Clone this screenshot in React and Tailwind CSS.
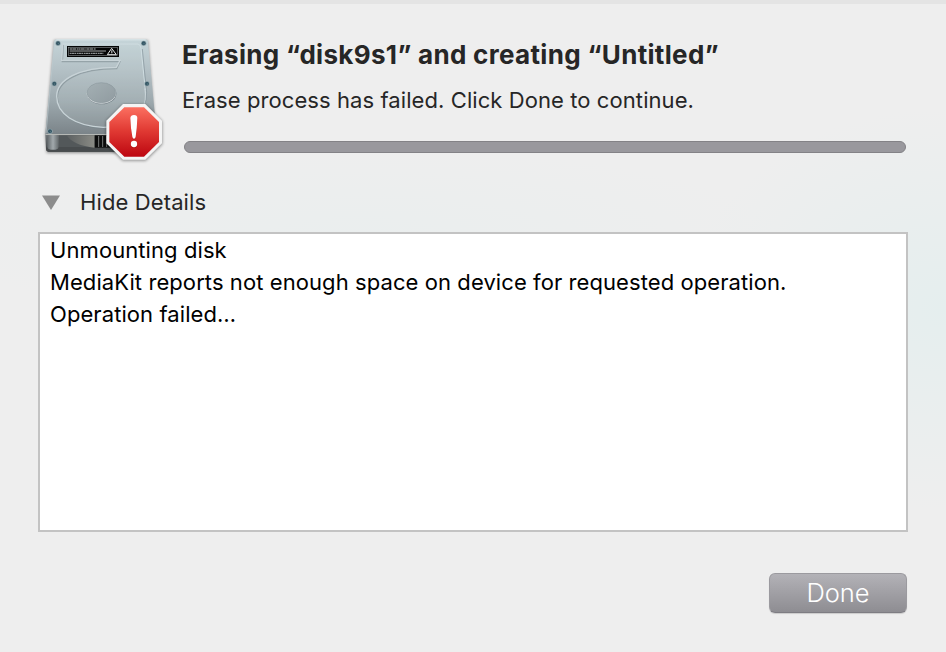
import { useState } from 'react'

const LOG = [
  'Unmounting disk',
  'MediaKit reports not enough space on device for requested operation.',
  'Operation failed…',
]

const SCREWS = [[84, 55], [341, 55], [73, 176], [351, 176], [60, 319]]

function DriveIcon() {
  return (
    <svg width="128" height="130" viewBox="24 27 384 390" className="shrink-0">
      <defs>
        <linearGradient id="plate" x1="0" y1="0" x2="0" y2="1">
          <stop offset="0" stopColor="#c5d5d9" />
          <stop offset="0.3" stopColor="#b5c2c7" />
          <stop offset="0.65" stopColor="#9da9ae" />
          <stop offset="1" stopColor="#7b8489" />
        </linearGradient>
        <linearGradient id="front" x1="0" y1="0" x2="0" y2="1">
          <stop offset="0" stopColor="#73797c" />
          <stop offset="0.6" stopColor="#565a5d" />
          <stop offset="1" stopColor="#3f4244" />
        </linearGradient>
        <linearGradient id="foot" x1="0" y1="0" x2="1" y2="0">
          <stop offset="0" stopColor="#62686b" />
          <stop offset="0.5" stopColor="#a2a9ac" />
          <stop offset="1" stopColor="#63696b" />
        </linearGradient>
        <linearGradient id="hub" x1="0" y1="0" x2="1" y2="1">
          <stop offset="0" stopColor="#a4b0b4" />
          <stop offset="1" stopColor="#909ba0" />
        </linearGradient>
        <linearGradient id="motor" x1="0" y1="0" x2="1" y2="0">
          <stop offset="0" stopColor="#5c6061" />
          <stop offset="1" stopColor="#8a8b85" />
        </linearGradient>
        <linearGradient id="stop" x1="0" y1="0" x2="0" y2="1">
          <stop offset="0" stopColor="#fb6f60" />
          <stop offset="0.45" stopColor="#e23c35" />
          <stop offset="1" stopColor="#bd0610" />
        </linearGradient>
        <filter id="soft" x="-20%" y="-20%" width="140%" height="140%">
          <feGaussianBlur stdDeviation="4" />
        </filter>
      </defs>

      {/* Enclosure */}
      <path d="M72 46 L46 330 L50 384 H340 L378 330 L354 46 Z" fill="#000" opacity="0.4" filter="url(#soft)" />
      <path d="M46 327 H350 V380 H56 Q48 380 48 372 Z" fill="url(#front)" />
      <path d="M86 331 H350 V378 H86 Z" fill="#53585a" />
      <path d="M50 366 H350 V380 H56 Q49 380 50 366 Z" fill="#484c4e" />
      <rect x="52" y="328" width="34" height="46" rx="10" fill="url(#foot)" />
      <path d="M110 331 H194 V368 Q130 362 110 331 Z" fill="url(#motor)" />
      <rect x="194" y="331" width="70" height="37" fill="#0c0d0d" />
      <path d="M206 333 V366 M218 333 V366 M230 333 V366" stroke="#777a78" strokeWidth="3" />
      <path d="M80 43 H346 Q353 43 354 50 L380 327 H46 L72 50 Q73 43 80 43 Z" fill="url(#plate)" />
      <path d="M79 44.5 H347" stroke="#dce7ea" strokeWidth="3" />
      <path d="M46 328.5 H380" stroke="#b5b8b5" strokeWidth="3" />
      <path d="M73 52 L48 325" stroke="#bdc9cd" strokeWidth="2" />

      {/* Raised cover */}
      <path d="M98 57 H325 Q332 58 334 70 L346 190 Q350 225 335 250 Q300 310 217 310 Q80 300 80 213 Q84 132 255 128 L268 106 H96 Z" fill="#c9d5d9" opacity="0.15" />
      <path d="M98 57 L95 108 H268 L258 129 C145 129 80 165 80 216 C80 268 135 304 220 308" fill="none" stroke="#727f85" strokeWidth="4" transform="translate(2 2)" opacity="0.5" />
      <path d="M98 57 L95 106 H270 L259 127 C145 127 80 165 80 214 C80 267 135 303 220 307 C288 307 338 280 346 225 Q348 208 345 190" fill="none" stroke="#c8d3d7" strokeWidth="4" />
      <path d="M98 57 H324 Q331 58 333 70 L346 195" fill="none" stroke="#cfdde1" strokeWidth="3" />
      <path d="M337 72 L350 202 Q350 224 344 240" fill="none" stroke="#84929a" strokeWidth="2" />
      <ellipse cx="215" cy="206" rx="44" ry="32" fill="#758188" />
      <ellipse cx="214" cy="205" rx="44" ry="31" fill="#d4dadc" />
      <ellipse cx="214" cy="203" rx="43" ry="30" fill="url(#hub)" stroke="#859398" strokeWidth="1.5" />

      {/* Warning label */}
      <rect x="111" y="63" width="156" height="33" fill="#050606" />
      <rect x="115" y="67" width="148" height="25" fill="none" stroke="#a3a8a9" strokeWidth="1.5" />
      <path d="M119 72 H198" stroke="#b8bcbd" strokeWidth="3" strokeDasharray="7 1 11 2 4 1" />
      <path d="M119 78 H228" stroke="#c6c9ca" strokeWidth="2.5" />
      <path d="M119 85 H220" stroke="#8c9091" strokeWidth="4" strokeDasharray="5 1 9 1 3 2" />
      <path d="M245 70 L232 89 H259 Z M245.5 76 V84 M245.5 86 V88" fill="none" stroke="#e4e6e6" strokeWidth="3" />

      {SCREWS.map(([x, y]) => (
        <g key={`${x}-${y}`}>
          <circle cx={x} cy={y} r="8" fill="#92a6ad" />
          <circle cx={x} cy={y} r="6" fill="#365866" />
          <circle cx={x + 1} cy={y + 1} r="1.5" fill="#729099" />
        </g>
      ))}

      {/* Error badge */}
      <path d="M278 239 H347 L397 289 V358 L347 407 H278 L228 358 V289 Z" fill="#000" opacity="0.4" filter="url(#soft)" />
      <path d="M279 237 H346 L396 287 V355 L346 404 H279 L229 355 V287 Z" fill="#f4f4f4" />
      <path d="M283 247 H342 L387 291 V351 L342 395 H283 L238 351 V291 Z" fill="url(#stop)" />
      <path d="M301 279 Q302 270 312 270 Q322 270 322 279 Q321 310 317 335 Q316 341 312 341 Q308 341 307 335 Q302 310 301 279 Z" fill="#8e1010" opacity="0.4" transform="translate(0 3)" />
      <path d="M301 279 Q302 270 312 270 Q322 270 322 279 Q321 310 317 335 Q316 341 312 341 Q308 341 307 335 Q302 310 301 279 Z" fill="#fff" />
      <circle cx="312" cy="359" r="10" fill="#8e1010" opacity="0.4" />
      <circle cx="312" cy="357" r="9.5" fill="#fff" />
    </svg>
  )
}

export default function App() {
  const [open, setOpen] = useState(true)

  return (
    <div className="flex h-[652px] w-[946px] flex-col overflow-hidden border-t-4 border-[#e4e4e4] bg-[#eeeeee] bg-[radial-gradient(ellipse_260px_200px_at_100%_47%,#e5eeee,transparent),radial-gradient(ellipse_420px_90px_at_38%_36%,#eaeeee,transparent)] px-[38px] font-['Inter',sans-serif] text-[#262626]">
      <div className="flex pt-[30px]">
        <DriveIcon />
        <div className="ml-4 flex flex-1 flex-col whitespace-nowrap">
          <h1 className="mt-1 text-[26px] leading-[34px] font-bold tracking-[0.32px]">
            Erasing “disk9s1” and creating “Untitled”
          </h1>
          <p className="mt-[13px] text-[22px] leading-[30px] tracking-[0.08px]">
            Erase process has failed. Click Done to continue.
          </p>
          <div className="mt-[26px] mr-[2px] ml-[2px] h-3 rounded-full border border-[#838286] bg-[#99989d]" />
        </div>
      </div>

      <button onClick={() => setOpen(!open)} className="mt-[23px] ml-1 flex h-[30px] items-center self-start text-[22px] leading-[30px] tracking-[0.12px]">
        <svg width="18" height="15" viewBox="0 0 18 15" className="mt-px">
          <path d="M0 0.5 H18 L9 15 Z" fill="#8c8c8c" />
        </svg>
        <span className="ml-5">Hide Details</span>
      </button>

      <div className="mt-[15px] h-[300px] border-2 border-[#c3c3c3] bg-white px-[10px] text-[22px] leading-[32px] tracking-[0.08px] whitespace-nowrap text-black">
        {open && LOG.map(line => <div key={line}>{line}</div>)}
      </div>

      <button className="mt-[41px] mr-px h-10 w-[138px] self-end rounded-[6px] border border-[#9b9a9f] border-b-[#7e7d83] bg-linear-to-b from-[#b3b2b7] to-[#8e8d92] text-[25.5px] leading-[38px] font-light text-white shadow-[0_1px_1px_rgba(0,0,0,0.15)]">
        Done
      </button>
    </div>
  )
}
